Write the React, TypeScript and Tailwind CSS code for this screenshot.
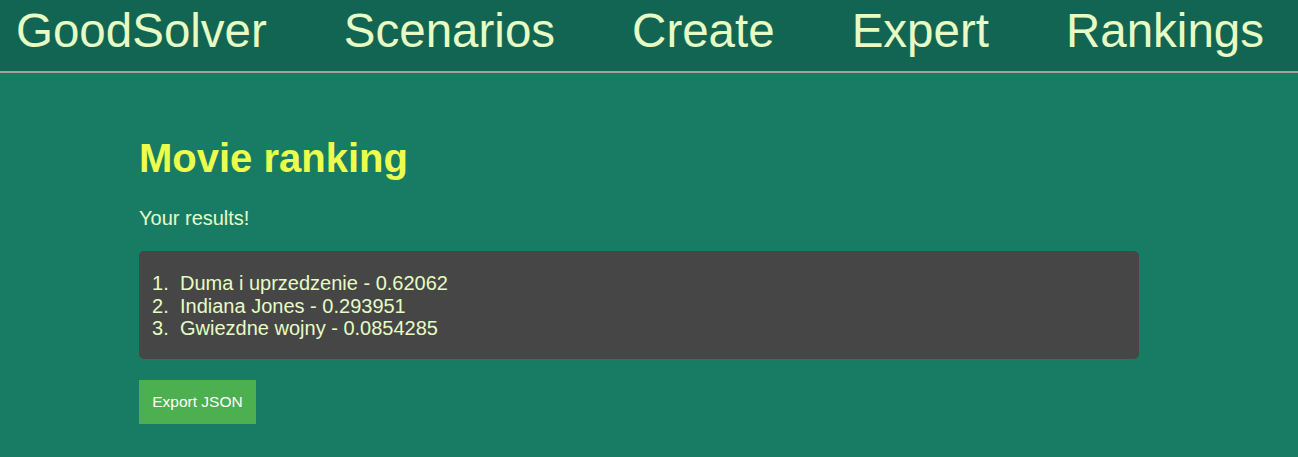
export default function App() {
  const results = [
    { name: 'Duma i uprzedzenie', score: '0.62062' },
    { name: 'Indiana Jones', score: '0.293951' },
    { name: 'Gwiezdne wojny', score: '0.0854285' }
  ]
  const links = ['GoodSolver', 'Scenarios', 'Create', 'Expert', 'Rankings']

  return (
    <div className="min-h-[457px] bg-[#187c65] font-['Liberation_Sans',Arial,sans-serif]">
      <nav className="h-[73px] bg-[#136553] border-b-2 border-[#a3a39c] flex gap-[77px] pl-[16px] pt-[7px]">
        {links.map(link => (
          <a key={link} className="text-[47.5px] leading-[48px] text-[#e6fcc4]">
            {link}
          </a>
        ))}
      </nav>

      <main className="ml-[139px] w-[1000px] pt-[62px]">
        <h1 className="text-[40px] leading-[46px] font-bold text-[#ecff4c]">Movie ranking</h1>
        <p className="mt-[26px] text-[20px] leading-[23px] text-[#e6fcc4]">Your results!</p>

        <div className="mt-[21px] h-[108px] rounded-[5px] bg-[#464646] px-[13px] pt-[21px] text-[20px] leading-[22.5px] text-[#e6fcc4]">
          {results.map((r, i) => (
            <div key={r.name} className="flex">
              <span className="w-[28px]">{i + 1}.</span>
              <span>
                {r.name} - {r.score}
              </span>
            </div>
          ))}
        </div>

        <button className="mt-[21px] h-[44px] w-[117px] bg-[#4caf50] text-[15.5px] text-white">
          Export JSON
        </button>
      </main>
    </div>
  )
}
